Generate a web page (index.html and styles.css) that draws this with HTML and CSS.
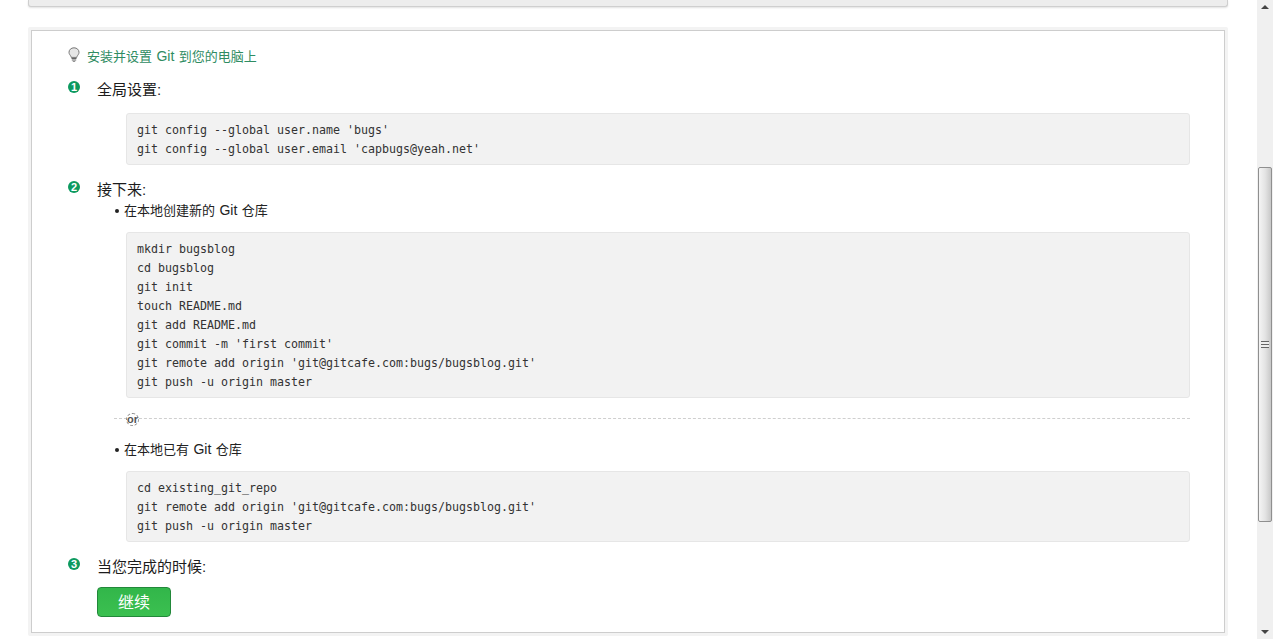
FILE: index.html
```html
<!DOCTYPE html>
<html lang="zh-CN">
<head>
<meta charset="utf-8">
<title>Git</title>
<link rel="stylesheet" href="styles.css">
</head>
<body>
<div class="page">
  <main class="main">
    <div class="top-panel"></div>
    <div class="card-frame">
      <section class="card">
        <div class="heading">
          <svg class="bulb" viewBox="0 0 12 15" width="12" height="15" aria-hidden="true">
            <path d="M6 .8C3 .8 1 2.900 1 5.300c0 1.900 1.300 2.800 1.900 4.100.2.400.3.700.3 1h5.600c0-.3.100-.6.300-1C9.700 8.100 11 7.200 11 5.300 11 2.900 9 .8 6 .8z" fill="#e6e6e6" stroke="#777" stroke-width="1"/>
            <path d="M3.500 11.500h5M3.800 13h4.400" stroke="#666" stroke-width="1.100" fill="none"/>
            <path d="M4.800 14.400h2.400" stroke="#888" stroke-width="1" fill="none"/>
          </svg>
          <span class="heading-text">安装并设置 <span class="latin">Git</span> 到您的电脑上</span>
        </div>

        <div class="step step-first">
          <span class="badge">1</span>
          <div class="step-title">全局设置:</div>
        </div>
        <pre class="code code-first">git config --global user.name 'bugs'
git config --global user.email 'capbugs@yeah.net'</pre>

        <div class="step">
          <span class="badge">2</span>
          <div class="step-title">接下来:</div>
        </div>
        <div class="bullet bullet-first"><i class="dot"></i><span>在本地创建新的 <span class="latin">Git</span> 仓库</span></div>
        <pre class="code">mkdir bugsblog
cd bugsblog
git init
touch README.md
git add README.md
git commit -m 'first commit'
git remote add origin 'git@gitcafe.com:bugs/bugsblog.git'
git push -u origin master</pre>

        <div class="divider"><span class="or">or</span></div>

        <div class="bullet"><i class="dot"></i><span>在本地已有 <span class="latin">Git</span> 仓库</span></div>
        <pre class="code">cd existing_git_repo
git remote add origin 'git@gitcafe.com:bugs/bugsblog.git'
git push -u origin master</pre>

        <div class="step step-last">
          <span class="badge">3</span>
          <div class="step-title">当您完成的时候:</div>
        </div>
        <button class="continue" type="button">继续</button>
      </section>
    </div>
  </main>
  <aside class="scrollbar" aria-hidden="true">
    <div class="arrow arrow-up"></div>
    <div class="thumb"><div class="grip"></div></div>
    <div class="arrow arrow-down"></div>
  </aside>
</div>
</body>
</html>
```

FILE: styles.css
```css
html, body {
  margin: 0;
  height: 639px;
  overflow: hidden;
  background: #fff;
  font-family: "Liberation Sans", "Noto Sans CJK SC", sans-serif;
  font-size: 14px;
  color: #222;
}

.page {
  display: flex;
  height: 639px;
}

.main {
  flex: 1;
  min-width: 0;
  padding: 0 29px 0 28px;
}

.top-panel {
  height: 6px;
  background: #ededed;
  border: 1px solid #cfcfcf;
  border-top: 0;
  border-radius: 0 0 3px 3px;
  box-shadow: 0 1px 2px rgba(0, 0, 0, .12);
}

.card-frame {
  margin-top: 20px;
  padding: 3px;
  background: #f3f3f3;
  border-radius: 2px;
}

.card {
  background: #fff;
  border: 1px solid #cdcdcd;
  padding: 15px 34px 15px 36px;
}

.heading {
  display: flex;
  align-items: center;
  height: 20px;
}

.bulb {
  margin-top: -4px;
  margin-right: 7px;
  flex: none;
}

.latin {
  font-size: 14px;
}

.heading-text {
  color: #2f8c62;
  font-size: 13px;
  line-height: 20px;
  word-spacing: .75px;
}

.step {
  display: flex;
  height: 20px;
  margin-top: 14px;
}

.step-first {
  margin-top: 13px;
}

.badge {
  flex: none;
  width: 12px;
  height: 12px;
  margin-top: 2px;
  margin-right: 17px;
  border-radius: 50%;
  background: #0d9a5f;
  color: #fff;
  font-size: 11px;
  font-weight: bold;
  line-height: 12px;
  text-align: center;
}

.step-title {
  padding-top: 1px;
  font-size: 15px;
  line-height: 20px;
  color: #1c1c1c;
}

.bullet {
  display: flex;
  align-items: center;
  height: 18px;
  margin-left: 47px;
  margin-top: 20px;
  font-size: 13px;
  word-spacing: .75px;
  color: #222;
}

.bullet-first {
  margin-top: 1px;
}

.dot {
  width: 4px;
  height: 4px;
  margin-top: 3px;
  margin-right: 5px;
  border-radius: 50%;
  background: #222;
  flex: none;
}

.code {
  margin: 14px 0 0 58px;
  padding: 7px 10px 5px;
  box-sizing: border-box;
  width: 1064px;
  background: #f2f2f2;
  border: 1px solid #e6e6e6;
  border-radius: 3px;
  font-family: "DejaVu Sans Mono", monospace;
  font-size: 11.630px;
  line-height: 19px;
  color: #333;
}

.divider {
  position: relative;
  height: 0;
  margin: 20px 0 0 46px;
  width: 1076px;
  border-top: 1px dashed #cfcfcf;
}

.or {
  position: absolute;
  left: 12px;
  top: -6px;
  width: 13px;
  height: 13px;
  box-sizing: border-box;
  border: 1px dashed #888;
  border-radius: 50%;
  background: #fff;
  color: #555;
  font-size: 11px;
  font-weight: bold;
  line-height: 10px;
  text-align: center;
}

.continue {
  display: block;
  width: 74px;
  height: 30px;
  margin: 11px 0 0 29px;
  padding: 0 0 2px;
  border: 1px solid #22883a;
  border-radius: 4px;
  background: linear-gradient(#32b64a, #3bc050);
  color: #fff;
  font-family: "Noto Sans CJK SC", sans-serif;
  font-size: 16px;
  line-height: 26px;
}

.scrollbar {
  flex: none;
  width: 16px;
  height: 639px;
  display: flex;
  flex-direction: column;
  background: #f0f0f0;
}

.arrow {
  position: relative;
  height: 17px;
  flex: none;
}

.arrow-up {
  margin-bottom: 150px;
}

.arrow-up::after,
.arrow-down::after {
  content: "";
  position: absolute;
  left: 4px;
  top: 5px;
  border-left: 4px solid transparent;
  border-right: 4px solid transparent;
}

.arrow-up::after {
  border-bottom: 4px solid #444;
}

.arrow-down {
  margin-top: auto;
}

.arrow-down::after {
  border-top: 4px solid #444;
  top: 8px;
}

.thumb {
  flex: none;
  height: 355px;
  margin: 0 1px;
  box-sizing: border-box;
  border: 1px solid #8f8f8f;
  border-radius: 2px;
  background: linear-gradient(90deg, #f4f4f4, #e4e4e4 50%, #c8c8c8);
  display: flex;
  align-items: center;
  justify-content: center;
}

.grip {
  width: 8px;
  height: 7px;
  background: repeating-linear-gradient(#666 0, #666 1px, #eee 1px, #eee 3px);
}
```
